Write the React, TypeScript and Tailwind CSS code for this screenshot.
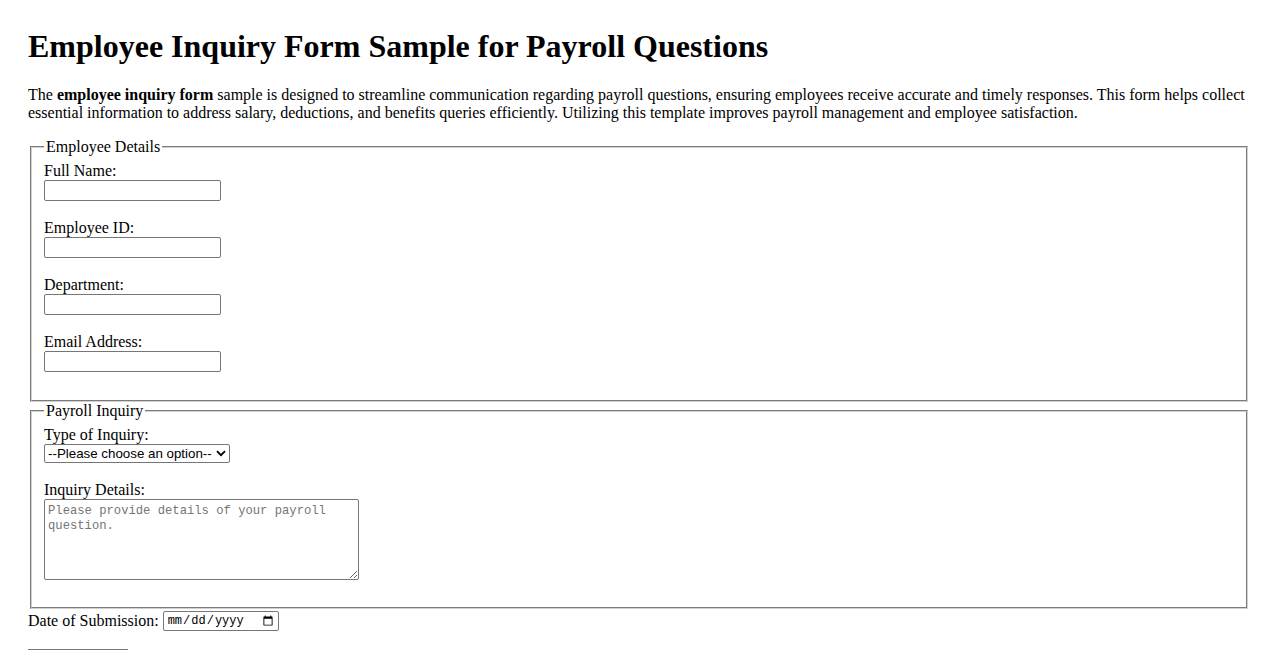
import React from "react";

const serif = "font-['Liberation_Serif','Times_New_Roman',serif]";
const control =
  "border border-[#767676] rounded-[2px] bg-white text-black font-['Liberation_Sans',Arial,sans-serif] text-[13.33px]";

function TextField({ label, id, type = "text" }: { label: string; id: string; type?: string }) {
  return (
    <div>
      <label htmlFor={id} className="block leading-[18px]">
        {label}
      </label>
      <input id={id} type={type} className={`block w-[177px] h-[21px] px-[2px] ${control}`} />
      <div className="h-[18px]" />
    </div>
  );
}

export default function App() {
  return (
    <div className={`${serif} text-black bg-white text-[16px] px-[28px] pt-[28px] min-h-[650px]`}>
      <h1 className="text-[32px] font-bold leading-[37px]">Employee Inquiry Form Sample for Payroll Questions</h1>
      <p className="mt-[21px] mb-[16px] leading-[18px]">
        The <strong>employee inquiry form</strong> sample is designed to streamline communication regarding payroll
        questions, ensuring employees receive accurate and timely responses. This form helps collect essential
        information to address salary, deductions, and benefits queries efficiently. Utilizing this template improves
        payroll management and employee satisfaction.
      </p>

      <form>
        <fieldset className="mx-[2px] border-2 [border-style:groove] border-[#d0d0d0] px-[12px] pt-[5.6px] pb-[10px]">
          <legend className="px-[2px] leading-[18px]">Employee Details</legend>
          <TextField label="Full Name:" id="name" />
          <TextField label="Employee ID:" id="empid" />
          <TextField label="Department:" id="dept" />
          <TextField label="Email Address:" id="email" type="email" />
        </fieldset>

        <fieldset className="mx-[2px] border-2 [border-style:groove] border-[#d0d0d0] px-[12px] pt-[6.6px] pb-[9px]">
          <legend className="px-[2px] leading-[18px]">Payroll Inquiry</legend>
          <label htmlFor="type" className="block leading-[18px]">
            Type of Inquiry:
          </label>
          <div className={`relative flex items-center w-[186px] h-[19px] ${control}`}>
            <span id="type" className="pl-[3px] leading-[17px] whitespace-nowrap">
              --Please choose an option--
            </span>
            <svg className="absolute right-[3px] top-[5px]" width="10" height="7" viewBox="0 0 10 7">
              <path d="M1 1.2 L5 5.2 L9 1.2" fill="none" stroke="#000" strokeWidth="1.8" />
            </svg>
          </div>
          <div className="h-[18px]" />
          <label htmlFor="details" className="block leading-[18px]">
            Inquiry Details:
          </label>
          <textarea
            id="details"
            placeholder="Please provide details of your payroll question."
            className="block w-[315px] h-[81px] px-[3px] pt-[4px] pb-[2px] border border-[#767676] rounded-[2px] font-['Liberation_Mono',Consolas,monospace] text-[12.2px] leading-[15px] placeholder:text-[#757575]"
          />
          <div className="h-[18px]" />
        </fieldset>

        <div className="flex items-center h-[22px] mt-[1px]">
          <label htmlFor="date" className="leading-[18px] mr-[4px] -mt-[1px]">
            Date of Submission:
          </label>
          <input
            id="date"
            type="date"
            className="w-[116px] h-[20px] pl-[3px] pr-[2px] border border-[#767676] rounded-[2px] font-['Liberation_Mono',Consolas,monospace] text-[12px]"
          />
        </div>

        <div className="mt-[17px] w-[100px] h-[30px] border-t border-[#767676]" />
      </form>
    </div>
  );
}
